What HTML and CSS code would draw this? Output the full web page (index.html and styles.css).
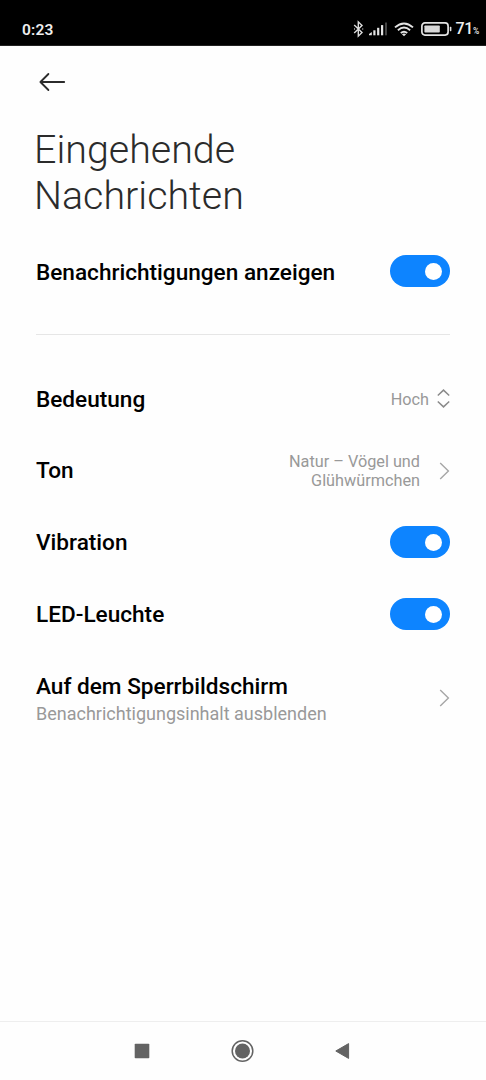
FILE: index.html
```
<!DOCTYPE html>
<html lang="de">

<head>
    <meta charset="UTF-8">
    <meta name="viewport" content="width=device-width, initial-scale=1.0">
    <title>Eingehende Nachrichten</title>
    <link rel="stylesheet" href="styles.css">
</head>

<body>
    <header class="status-bar">
        <span class="clock">0:23</span>
        <div class="status-icons">
            <!-- Bluetooth -->
            <svg class="icon-bluetooth" width="11" height="18" viewBox="0 0 11 18" fill="none" stroke="#ddd" stroke-width="1.4">
                <path d="M1.2 5 L9 12.6 L5.3 16.2 V1.8 L9 5.4 L1.2 13" />
                <path d="M1 9h.8M9.4 9h.8" />
            </svg>
            <!-- Mobilfunk -->
            <svg class="icon-signal" width="19" height="14" viewBox="0 0 19 14" fill="#e4e4e4">
                <path d="M0 13.3V12l2.8-2v3.3z" />
                <rect x="4.3" y="8.3" width="2.2" height="5" />
                <rect x="8.1" y="5.8" width="2.2" height="7.5" />
                <rect x="12" y="3.1" width="2.2" height="10.2" />
                <rect x="16" y="0.5" width="2" height="12.8" fill="#444" />
            </svg>
            <!-- WLAN -->
            <svg class="icon-wifi" width="20" height="15" viewBox="0 0 20 15" fill="none" stroke="#e4e4e4" stroke-width="1.9">
                <path d="M1 5.4Q10-2.6 19 5.4" />
                <path d="M3.9 8.2Q10 2.9 16.1 8.2" />
                <path d="M6.8 11Q10 8.3 13.2 11" />
                <path d="M10 14.3L7.9 12.2Q10 10.8 12.1 12.2z" fill="#e4e4e4" stroke="none" />
            </svg>
            <!-- Akku -->
            <svg class="icon-battery" width="31" height="14" viewBox="0 0 31 14">
                <rect x="0.9" y="0.9" width="26.2" height="12.2" rx="3" fill="none" stroke="#e4e4e4" stroke-width="1.7" />
                <rect x="3.4" y="3.4" width="15.4" height="7.2" rx="0.8" fill="#d8d8d8" />
                <rect x="28.8" y="4.8" width="1.6" height="4.4" rx="0.6" fill="#e4e4e4" />
            </svg>
            <span class="battery-level">71<small>%</small></span>
        </div>
    </header>

    <main class="page">
        <svg class="back" width="28" height="20" viewBox="0 0 28 20" fill="none" stroke="#2b2b2b" stroke-width="1.8" stroke-linecap="round" stroke-linejoin="round">
            <path d="M26.2 10H2.4M10.4 2L2.4 10L10.4 18" />
        </svg>
        <h1 class="title">Eingehende<br>Nachrichten</h1>

        <div class="row row-main">
            <span class="label">Benachrichtigungen anzeigen</span>
            <span class="switch"></span>
        </div>

        <hr class="divider">

        <div class="row">
            <span class="label">Bedeutung</span>
            <span class="value">Hoch</span>
            <svg class="updown" width="14" height="20" viewBox="0 0 14 20" fill="none" stroke="#8a8a8a" stroke-width="1.5">
                <path d="M1.8 6.5L7.5 1.1L13.2 6.5M1.8 12.5L7.5 17.9L13.2 12.5" />
            </svg>
        </div>
        <div class="row row-sound">
            <span class="label">Ton</span>
            <span class="value value-long">Natur – Vögel und<br>Glühwürmchen</span>
            <svg class="chevron" width="11" height="18" viewBox="0 0 11 18" fill="none" stroke="#a6a6a6" stroke-width="1.4">
                <path d="M1.2 1L9.4 9L1.2 17" />
            </svg>
        </div>
        <div class="row">
            <span class="label">Vibration</span>
            <span class="switch"></span>
        </div>
        <div class="row">
            <span class="label">LED-Leuchte</span>
            <span class="switch"></span>
        </div>
        <div class="row row-tall">
            <div class="label">
                Auf dem Sperrbildschirm
                <div class="summary">Benachrichtigungsinhalt ausblenden</div>
            </div>
            <svg class="chevron" width="11" height="18" viewBox="0 0 11 18" fill="none" stroke="#a6a6a6" stroke-width="1.4">
                <path d="M1.2 1L9.4 9L1.2 17" />
            </svg>
        </div>
    </main>

    <nav class="nav-bar">
        <svg width="24" height="24" viewBox="0 0 24 24" fill="#636363">
            <rect x="4.7" y="4.7" width="14.6" height="14.6" rx="0.8" />
        </svg>
        <svg width="24" height="24" viewBox="0 0 24 24" fill="#636363">
            <circle cx="12.5" cy="12" r="10.3" fill="none" stroke="#636363" stroke-width="1.5" />
            <circle cx="12.5" cy="12" r="7.5" />
        </svg>
        <svg width="24" height="24" viewBox="0 0 24 24" fill="#636363" stroke="#636363" stroke-linejoin="round">
            <path d="M5.8 12L18.6 4.6V19.4z" />
        </svg>
    </nav>
</body>

</html>
```
FILE: styles.css
```
* {
    margin: 0;
    padding: 0;
    box-sizing: border-box;
}

body {
    background: #fefefe;
    font-family: Roboto, "Noto Sans", sans-serif;
    height: 100vh;
    display: flex;
    flex-direction: column;
    overflow: hidden;
}

svg {
    display: block;
    flex-shrink: 0;
}

/* Statusleiste */
.status-bar {
    height: 46px;
    background: #000;
    border-bottom: 1px solid #222;
    color: #eee;
    display: flex;
    justify-content: space-between;
    align-items: center;
    padding: 13px 7px 0 22px;
}

.clock {
    padding-top: 1px;
    font-size: 15.5px;
    font-weight: 600;
    letter-spacing: 0.2px;
}

.status-icons {
    display: flex;
    align-items: center;
}

.icon-signal {
    margin-left: 5px;
}

.icon-wifi {
    margin-left: 6px;
}

.icon-battery {
    margin-left: 7px;
}

.battery-level {
    display: flex;
    align-items: baseline;
    margin-left: 3px;
    padding-top: 2px;
    font-size: 16px;
    font-weight: 500;
    line-height: 18px;
    letter-spacing: -0.3px;
}

.battery-level small {
    font-size: 8.5px;
}

/* Inhalt */
.page {
    flex: 1;
    padding: 26px 36px 0;
}

.back {
    margin-left: 2px;
}

.title {
    margin: 35px 0 0 -2px;
    font-size: 39.4px;
    font-weight: 300;
    line-height: 46px;
    color: #2b2b2b;
}

.row {
    display: flex;
    align-items: center;
    height: 72px;
}

.row-main {
    margin-top: 16px;
}

.row-sound {
    height: 71px;
}

.row-tall {
    height: 95px;
}

.label {
    flex: 1;
    padding-top: 1px;
    font-size: 22.6px;
    font-weight: 480;
    line-height: 28px;
    color: #000;
}

.row-main .label {
    padding-top: 3px;
}

.row-tall .label {
    padding-top: 4px;
}

.summary {
    font-size: 18px;
    font-weight: 400;
    line-height: 26px;
    color: #999;
}

.value {
    font-size: 16.25px;
    line-height: 19px;
    color: #999;
    text-align: right;
}

.updown {
    margin-left: 7px;
}

.value-long {
    margin-right: 19px;
}

.divider {
    border: 0;
    height: 1px;
    background: #e6e6e6;
    margin: 27px 0 28px;
}

/* Schalter */
.switch {
    width: 60px;
    height: 32px;
    border-radius: 16px;
    background: #0d84ff;
    display: flex;
    align-items: center;
    justify-content: flex-end;
    padding-right: 8px;
}

.switch::after {
    content: "";
    width: 17px;
    height: 17px;
    border-radius: 50%;
    background: #fff;
}

/* Navigationsleiste */
.nav-bar {
    height: 59px;
    border-top: 1px solid #eee;
    display: flex;
    justify-content: center;
    align-items: center;
    gap: 76px;
    padding-right: 2px;
}
```
